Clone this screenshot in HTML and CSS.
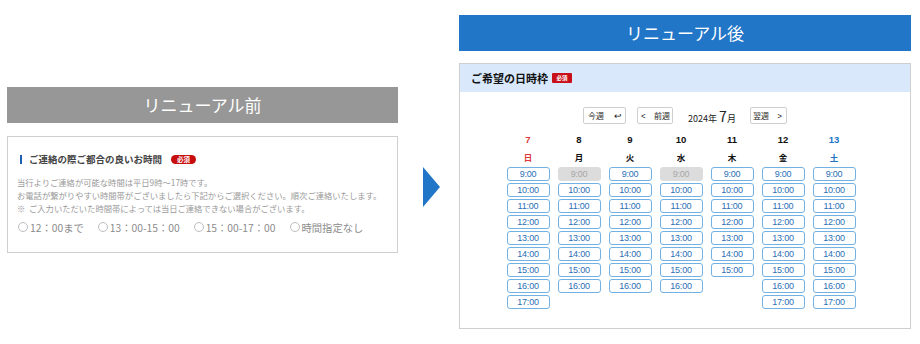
FILE: index.html
```html
<!DOCTYPE html>
<html>
  <head>
    <meta charset="utf-8" />
    <title>リニューアル比較</title>
    <link rel="stylesheet" href="styles.css">
  </head>
  <body>
    <div class="compare">
      <div class="before">
        <div class="label label-before">リニューアル前</div>
        <div class="old-form">
          <div class="old-heading">
            <span class="old-bar"></span>
            <span class="old-title">ご連絡の際ご都合の良いお時間</span>
            <span class="old-badge">必須</span>
          </div>
          <div class="old-desc">
            当行よりご連絡が可能な時間は平日9時～17時です。<br/>
            お電話が繋がりやすい時間帯がございましたら下記からご選択ください。順次ご連絡いたします。<br/>
            ※&nbsp; ご入力いただいた時間帯によっては当日ご連絡できない場合がございます。
          </div>
          <div class="old-radios">
            <span class="old-radio"><span class="circle"></span>12：00まで</span>
            <span class="old-radio"><span class="circle"></span>13：00-15：00</span>
            <span class="old-radio"><span class="circle"></span>15：00-17：00</span>
            <span class="old-radio"><span class="circle"></span>時間指定なし</span>
          </div>
        </div>
      </div>

      <div class="arrow"></div>

      <div class="after">
        <div class="label label-after">リニューアル後</div>
        <div class="new-form">
          <div class="new-header">
            <span class="new-title">ご希望の日時枠</span>
            <span class="new-badge">必須</span>
          </div>
          <div class="nav">
            <span class="nav-btn nav-today">今週 <span class="back">↩</span></span>
            <span class="nav-btn nav-prev"><span class="chev">&lt;</span> 前週</span>
            <span class="month">2024年 <b>7</b>月</span>
            <span class="nav-btn nav-next">翌週 <span class="chev">&gt;</span></span>
          </div>
          <div class="calendar">
            <div class="day sun">
              <div class="date">7</div>
              <div class="wd">日</div>
              <span class="slot">9:00</span>
              <span class="slot">10:00</span>
              <span class="slot">11:00</span>
              <span class="slot">12:00</span>
              <span class="slot">13:00</span>
              <span class="slot">14:00</span>
              <span class="slot">15:00</span>
              <span class="slot">16:00</span>
              <span class="slot">17:00</span>
            </div>
            <div class="day">
              <div class="date">8</div>
              <div class="wd">月</div>
              <span class="slot off">9:00</span>
              <span class="slot">10:00</span>
              <span class="slot">11:00</span>
              <span class="slot">12:00</span>
              <span class="slot">13:00</span>
              <span class="slot">14:00</span>
              <span class="slot">15:00</span>
              <span class="slot">16:00</span>
            </div>
            <div class="day">
              <div class="date">9</div>
              <div class="wd">火</div>
              <span class="slot">9:00</span>
              <span class="slot">10:00</span>
              <span class="slot">11:00</span>
              <span class="slot">12:00</span>
              <span class="slot">13:00</span>
              <span class="slot">14:00</span>
              <span class="slot">15:00</span>
              <span class="slot">16:00</span>
            </div>
            <div class="day">
              <div class="date">10</div>
              <div class="wd">水</div>
              <span class="slot off">9:00</span>
              <span class="slot">10:00</span>
              <span class="slot">11:00</span>
              <span class="slot">12:00</span>
              <span class="slot">13:00</span>
              <span class="slot">14:00</span>
              <span class="slot">15:00</span>
              <span class="slot">16:00</span>
            </div>
            <div class="day">
              <div class="date">11</div>
              <div class="wd">木</div>
              <span class="slot">9:00</span>
              <span class="slot">10:00</span>
              <span class="slot">11:00</span>
              <span class="slot">12:00</span>
              <span class="slot">13:00</span>
              <span class="slot">14:00</span>
              <span class="slot">15:00</span>
            </div>
            <div class="day">
              <div class="date">12</div>
              <div class="wd">金</div>
              <span class="slot">9:00</span>
              <span class="slot">10:00</span>
              <span class="slot">11:00</span>
              <span class="slot">12:00</span>
              <span class="slot">13:00</span>
              <span class="slot">14:00</span>
              <span class="slot">15:00</span>
              <span class="slot">16:00</span>
              <span class="slot">17:00</span>
            </div>
            <div class="day sat">
              <div class="date">13</div>
              <div class="wd">土</div>
              <span class="slot">9:00</span>
              <span class="slot">10:00</span>
              <span class="slot">11:00</span>
              <span class="slot">12:00</span>
              <span class="slot">13:00</span>
              <span class="slot">14:00</span>
              <span class="slot">15:00</span>
              <span class="slot">16:00</span>
              <span class="slot">17:00</span>
            </div>
          </div>
        </div>
      </div>
    </div>
  </body>
</html>
```

FILE: styles.css
```css
body {
    font-family: "Liberation Sans", "Noto Sans CJK JP", sans-serif;
    margin: 0;
    background: #fff;
    color: #333;
}
.compare {
    display: flex;
    flex-direction: row;
    align-items: flex-start;
    width: 920px;
    height: 344px;
}
.before {
    width: 391px;
    margin-left: 7px;
    padding-top: 87px;
}
.after {
    width: 452px;
    margin-left: 19px;
    padding-top: 15px;
}
.label {
    height: 36px;
    line-height: 36px;
    text-align: center;
    color: #fff;
    font-size: 17px;
    font-family: "Noto Sans CJK JP", sans-serif;
}
.label-before {
    background: #979797;
}
.label-after {
    background: #2176c7;
}

/* old form */
.old-form {
    margin-top: 13px;
    border: 1px solid #cfcfcf;
    padding: 16px 10px 17px 9px;
    height: 82px;
}
.old-heading {
    display: flex;
    align-items: center;
    height: 12px;
    padding-left: 3px;
}
.old-bar {
    width: 2px;
    height: 9px;
    background: #1d5fb2;
    margin-right: 7px;
}
.old-title {
    font-size: 9.5px;
    font-weight: bold;
    color: #444;
    font-family: "Noto Sans CJK JP", sans-serif;
}
.old-badge {
    margin-left: 9px;
    background: #c70d0d;
    color: #fff;
    font-size: 6.5px;
    font-weight: bold;
    border-radius: 5px;
    width: 25px;
    height: 9px;
    line-height: 9px;
    text-align: center;
    font-family: "Noto Sans CJK JP", sans-serif;
}
.old-desc {
    margin-top: 11px;
    font-size: 8.3px;
    line-height: 13px;
    color: #999;
    font-family: "Noto Sans CJK JP", sans-serif;
    white-space: nowrap;
}
.old-radios {
    display: flex;
    margin-top: 4px;
    height: 16px;
    align-items: center;
    font-size: 10.3px;
    color: #8c8c8c;
    font-family: "Noto Sans CJK JP", sans-serif;
}
.old-radio {
    display: flex;
    align-items: center;
    margin-right: 13px;
    white-space: nowrap;
}
.circle {
    display: inline-block;
    width: 8px;
    height: 8px;
    border: 1px solid #bdbdbd;
    border-radius: 50%;
    margin: 0 2px 0 1px;
}

/* arrow */
.arrow {
    margin-top: 167px;
    margin-left: 25px;
    width: 0;
    height: 0;
    border-top: 20.5px solid transparent;
    border-bottom: 20.5px solid transparent;
    border-left: 17px solid #2176c7;
}

/* new form */
.new-form {
    margin-top: 12px;
    border: 1px solid #cfcfcf;
    height: 264px;
}
.new-header {
    background: #d9e8fb;
    height: 28px;
    display: flex;
    align-items: center;
    padding-left: 11px;
}
.new-title {
    font-size: 11px;
    font-weight: bold;
    color: #111;
    font-family: "Noto Sans CJK JP", sans-serif;
}
.new-badge {
    margin-left: 4px;
    background: #c8101a;
    color: #fff;
    font-size: 5.5px;
    font-weight: bold;
    width: 20px;
    height: 10px;
    line-height: 10px;
    text-align: center;
    border-radius: 1px;
    font-family: "Noto Sans CJK JP", sans-serif;
}
.nav {
    display: flex;
    justify-content: center;
    align-items: center;
    margin-top: 15px;
    height: 17px;
    font-size: 8px;
    color: #222;
    font-family: "Noto Sans CJK JP", sans-serif;
}
.nav-btn {
    display: flex;
    align-items: center;
    height: 15px;
    border: 1px solid #cfcfcf;
    border-radius: 2px;
    background: #fff;
    box-sizing: content-box;
}
.nav-today {
    width: 34px;
    padding: 0 3px 0 4px;
    justify-content: space-between;
}
.nav-prev {
    width: 29px;
    padding: 0 2px 0 3px;
    justify-content: space-between;
    margin-left: 11px;
}
.nav-next {
    width: 29px;
    padding: 0 4px 0 2px;
    justify-content: space-between;
}
.back {
    font-size: 9px;
}
.chev {
    font-size: 8px;
    transform: scaleY(1.2);
}
.month {
    margin: 0 14px 0 15px;
    font-size: 9px;
    white-space: nowrap;
}
.month b {
    font-weight: normal;
    font-size: 14px;
}
.calendar {
    display: grid;
    grid-template-columns: repeat(7, 43px);
    column-gap: 8px;
    justify-content: center;
    padding-right: 8px;
    margin-top: 10px;
}
.day {
    display: flex;
    flex-direction: column;
    align-items: stretch;
}
.date {
    text-align: center;
    font-size: 9.5px;
    font-weight: bold;
    line-height: 12px;
    color: #111;
}
.wd {
    text-align: center;
    font-size: 8.5px;
    font-weight: bold;
    line-height: 12px;
    margin-top: 5px;
    margin-bottom: 4px;
    color: #111;
    font-family: "Noto Sans CJK JP", sans-serif;
}
.sun .date, .sun .wd {
    color: #e0383a;
}
.sat .date, .sat .wd {
    color: #1c74c6;
}
.slot {
    display: block;
    height: 14px;
    line-height: 12px;
    box-sizing: border-box;
    border: 1px solid #72b1e3;
    border-radius: 3px;
    text-align: center;
    font-size: 9px;
    color: #2a6fb6;
    margin-bottom: 2px;
    letter-spacing: -0.2px;
}
.slot.off {
    background: #dcdcdc;
    border-color: #dcdcdc;
    color: #a8a8a8;
}
```
